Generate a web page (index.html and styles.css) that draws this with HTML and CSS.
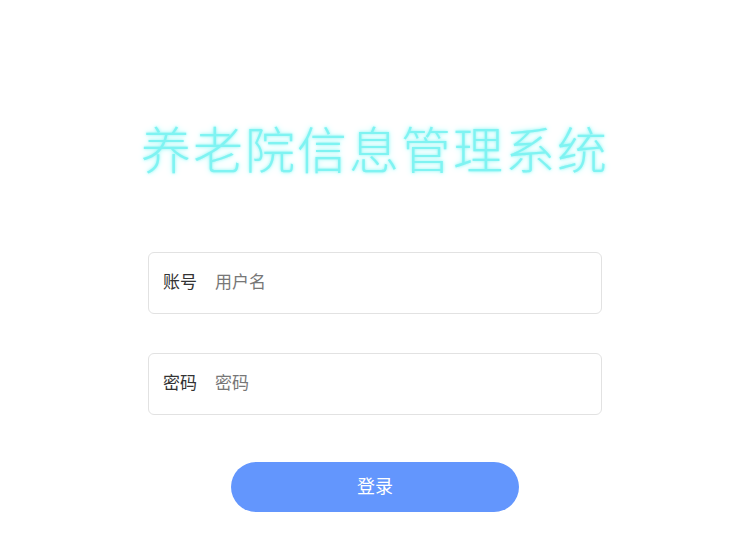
FILE: index.html
```html
<!DOCTYPE html>
<html lang="zh">
<head>
<meta charset="utf-8">
<title>养老院信息管理系统</title>
<link rel="stylesheet" href="styles.css">
</head>
<body>
<div class="page">
  <h1 class="title">养老院信息管理系统</h1>
  <form class="form">
    <label class="field">
      <span class="field-label">账号</span>
      <input class="field-input" type="text" placeholder="用户名">
    </label>
    <label class="field">
      <span class="field-label">密码</span>
      <input class="field-input" type="password" placeholder="密码">
    </label>
    <button class="submit" type="button">登录</button>
  </form>
</div>
</body>
</html>
```
FILE: styles.css
```css
html, body {
  margin: 0;
  padding: 0;
  background: #ffffff;
}
body {
  font-family: "Noto Sans CJK SC", "Noto Sans", sans-serif;
}
.page {
  width: 454px;
  margin-left: calc(50% - 226px);
  padding-top: 109px;
  display: flex;
  flex-direction: column;
  align-items: center;
}
.title {
  margin: 0;
  font-size: 50px;
  line-height: 76px;
  font-weight: 300;
  color: #7ff3f2;
  text-shadow: 0 0 3px #8ff7f5, 0 0 6px #b5fbfa;
  letter-spacing: 2px;
  white-space: nowrap;
}
.form {
  width: 100%;
  margin-top: 67px;
  display: flex;
  flex-direction: column;
  align-items: center;
}
.field {
  box-sizing: border-box;
  width: 454px;
  height: 62px;
  border: 1px solid #e2e2e2;
  border-radius: 6px;
  display: flex;
  align-items: center;
  padding-left: 14px;
  padding-bottom: 5px;
  margin-bottom: 39px;
}
.field-label {
  font-size: 17px;
  color: #333333;
  margin-right: 18px;
}
.field-input {
  flex: 1;
  border: none;
  outline: none;
  background: transparent;
  font-family: inherit;
  font-size: 17px;
  color: #333;
  padding: 0;
}
.field-input::placeholder {
  color: #777777;
}
.submit {
  margin-top: 8px;
  width: 288px;
  height: 50px;
  border: none;
  border-radius: 25px;
  background: #6396fd;
  color: #ffffff;
  font-family: inherit;
  font-size: 18px;
  padding: 0 0 4px;
  cursor: pointer;
}
```
